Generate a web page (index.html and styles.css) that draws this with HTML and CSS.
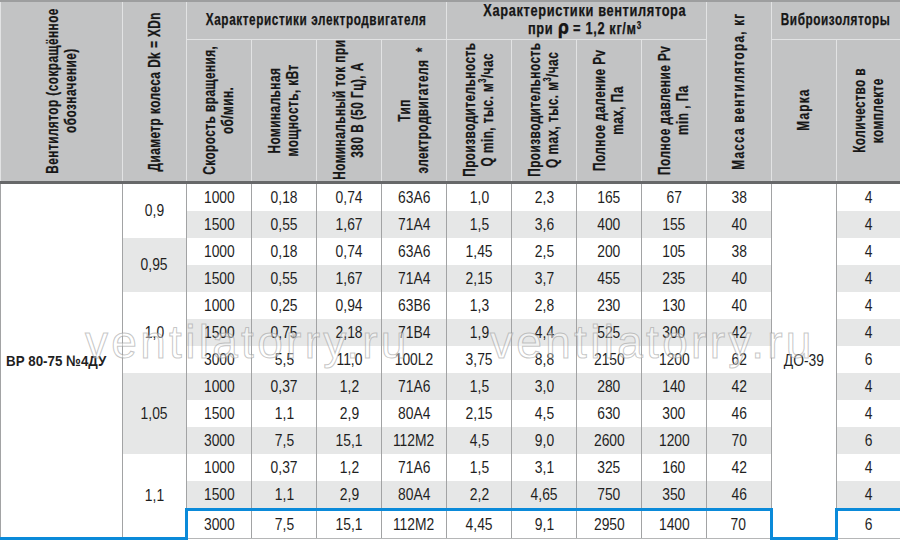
FILE: index.html
```html
<!DOCTYPE html>
<html lang="ru">
<head>
<meta charset="utf-8">
<title>ВР 80-75 №4ДУ</title>
<link rel="stylesheet" href="styles.css">
</head>
<body>
<div class="wrap">
<table class="spec">
  <colgroup>
    <col class="c-name"><col class="c-dia">
    <col class="c-std"><col class="c-std"><col class="c-std"><col class="c-std">
    <col class="c-std"><col class="c-std"><col class="c-std"><col class="c-std">
    <col class="c-std"><col class="c-std"><col class="c-last">
  </colgroup>
  <thead>
    <tr class="h1">
      <th rowspan="2"><div class="vbox"><div class="v">Вентилятор (сокращённое<br>обозначение)</div></div></th>
      <th rowspan="2"><div class="vbox"><div class="v">Диаметр колеса Dk = XDn</div></div></th>
      <th colspan="4" class="grp"><div class="gbox"><span class="gt narrow">Характеристики электродвигателя</span></div></th>
      <th colspan="4" class="grp grp-vent"><div class="gbox"><span class="gt">Характеристики вентилятора<br>при <span class="rho">ρ</span> = 1,2 кг/м<sup>3</sup></span></div></th>
      <th rowspan="2"><div class="vbox"><div class="v wide">Масса вентилятора, кг</div></div></th>
      <th colspan="2" class="grp"><div class="gbox"><span class="gt narrow">Виброизоляторы</span></div></th>
    </tr>
    <tr class="h2">
      <th><div class="vbox"><div class="v">Скорость вращения,<br>об/мин.</div></div></th>
      <th><div class="vbox"><div class="v">Номинальная<br>мощность, кВт</div></div></th>
      <th><div class="vbox"><div class="v">Номинальный ток при<br>380 В (50 Гц), А</div></div></th>
      <th><div class="vbox"><div class="v">Тип<br>электродвигателя&nbsp;&nbsp;*</div></div></th>
      <th><div class="vbox"><div class="v">Производительность<br>Q min, тыс. м<sup>3</sup>/час</div></div></th>
      <th><div class="vbox"><div class="v">Производительность<br>Q max, тыс. м<sup>3</sup>/час</div></div></th>
      <th><div class="vbox"><div class="v">Полное даление Pv<br>max, Па</div></div></th>
      <th><div class="vbox"><div class="v">Полное давление Pv<br>min , Па</div></div></th>
      <th><div class="vbox"><div class="v wide">Марка</div></div></th>
      <th><div class="vbox"><div class="v">Количество в<br>комплекте</div></div></th>
    </tr>
  </thead>
  <tbody>
    <tr>
      <td rowspan="13" class="name span"><b>ВР 80-75 №4ДУ</b></td>
      <td rowspan="2" class="span"><span>0,9</span></td>
      <td><span>1000</span></td><td><span>0,18</span></td><td><span>0,74</span></td><td><span>63А6</span></td><td><span>1,0</span></td><td><span>2,3</span></td><td><span>165</span></td><td><span>67</span></td><td><span>38</span></td>
      <td rowspan="13" class="span mark"><span>ДО-39</span></td>
      <td><span>4</span></td>
    </tr>
    <tr>
      <td><span>1500</span></td><td><span>0,55</span></td><td><span>1,67</span></td><td><span>71А4</span></td><td><span>1,5</span></td><td><span>3,6</span></td><td><span>400</span></td><td><span>155</span></td><td><span>40</span></td><td><span>4</span></td>
    </tr>
    <tr>
      <td rowspan="2" class="span shade"><span>0,95</span></td>
      <td><span>1000</span></td><td><span>0,18</span></td><td><span>0,74</span></td><td><span>63А6</span></td><td><span>1,45</span></td><td><span>2,5</span></td><td><span>200</span></td><td><span>105</span></td><td><span>38</span></td><td><span>4</span></td>
    </tr>
    <tr>
      <td><span>1500</span></td><td><span>0,55</span></td><td><span>1,67</span></td><td><span>71А4</span></td><td><span>2,15</span></td><td><span>3,7</span></td><td><span>455</span></td><td><span>235</span></td><td><span>40</span></td><td><span>4</span></td>
    </tr>
    <tr>
      <td rowspan="3" class="span"><span>1,0</span></td>
      <td><span>1000</span></td><td><span>0,25</span></td><td><span>0,94</span></td><td><span>63В6</span></td><td><span>1,3</span></td><td><span>2,8</span></td><td><span>230</span></td><td><span>130</span></td><td><span>40</span></td><td><span>4</span></td>
    </tr>
    <tr>
      <td><span>1500</span></td><td><span>0,75</span></td><td><span>2,18</span></td><td><span>71В4</span></td><td><span>1,9</span></td><td><span>4,4</span></td><td><span>525</span></td><td><span>300</span></td><td><span>42</span></td><td><span>4</span></td>
    </tr>
    <tr>
      <td><span>3000</span></td><td><span>5,5</span></td><td><span>11,0</span></td><td><span>100L2</span></td><td><span>3,75</span></td><td><span>8,8</span></td><td><span>2150</span></td><td><span>1200</span></td><td><span>62</span></td><td><span>6</span></td>
    </tr>
    <tr>
      <td rowspan="3" class="span shade"><span>1,05</span></td>
      <td><span>1000</span></td><td><span>0,37</span></td><td><span>1,2</span></td><td><span>71А6</span></td><td><span>1,5</span></td><td><span>3,0</span></td><td><span>280</span></td><td><span>140</span></td><td><span>42</span></td><td><span>4</span></td>
    </tr>
    <tr>
      <td><span>1500</span></td><td><span>1,1</span></td><td><span>2,9</span></td><td><span>80А4</span></td><td><span>2,15</span></td><td><span>4,5</span></td><td><span>630</span></td><td><span>300</span></td><td><span>46</span></td><td><span>4</span></td>
    </tr>
    <tr>
      <td><span>3000</span></td><td><span>7,5</span></td><td><span>15,1</span></td><td><span>112М2</span></td><td><span>4,5</span></td><td><span>9,0</span></td><td><span>2600</span></td><td><span>1200</span></td><td><span>70</span></td><td><span>6</span></td>
    </tr>
    <tr>
      <td rowspan="3" class="span last-span"><span>1,1</span></td>
      <td><span>1000</span></td><td><span>0,37</span></td><td><span>1,2</span></td><td><span>71А6</span></td><td><span>1,5</span></td><td><span>3,1</span></td><td><span>325</span></td><td><span>160</span></td><td><span>42</span></td><td><span>4</span></td>
    </tr>
    <tr>
      <td><span>1500</span></td><td><span>1,1</span></td><td><span>2,9</span></td><td><span>80А4</span></td><td><span>2,2</span></td><td><span>4,65</span></td><td><span>750</span></td><td><span>350</span></td><td><span>46</span></td><td><span>4</span></td>
    </tr>
    <tr class="sel">
      <td class="sel-first"><span>3000</span></td><td><span>7,5</span></td><td><span>15,1</span></td><td><span>112М2</span></td><td><span>4,45</span></td><td><span>9,1</span></td><td><span>2950</span></td><td><span>1400</span></td><td class="sel-end"><span>70</span></td><td class="sel-qty"><span>6</span></td>
    </tr>
  </tbody>
</table>
<div class="wm wm-1">ventilatorry.ru</div>
<div class="wm wm-2">ventilatorry.ru</div>
</div>
</body>
</html>
```
FILE: styles.css
```css
html, body {
  margin: 0;
  padding: 0;
  background: #ffffff;
}

body {
  font-family: "Liberation Sans", Arial, sans-serif;
  color: #1f1f1f;
}

.wrap {
  position: relative;
  width: 900px;
  height: 540px;
  overflow: hidden;
}

.spec {
  width: 900px;
  border-collapse: collapse;
  table-layout: fixed;
}

.c-name { width: 122px; }
.c-dia { width: 64px; }
.c-std { width: 65px; }
.c-last { width: 64px; }

/* ---------- header ---------- */
.spec th {
  background: #c2c3c4;
  color: #161616;
  font-weight: bold;
  font-size: 16px;
  line-height: 18px;
  padding: 0;
  text-align: center;
  vertical-align: middle;
  border: 1px solid #e2e3e4;
  white-space: nowrap;
  overflow: visible;
  -webkit-text-stroke: 0.25px #161616;
}

.spec thead tr.h1 th {
  border-top: 2px solid #9d9e9f;
}

.spec tr.h1 { height: 38px; }
.spec tr.h2 { height: 143px; }

.vbox {
  height: 0;
  display: flex;
  align-items: center;
  justify-content: center;
}

.v {
  flex: none;
  writing-mode: vertical-rl;
  white-space: nowrap;
  text-align: center;
  letter-spacing: 0.6px;
  transform: rotate(180deg) scaleY(0.74);
}

.v.wide {
  letter-spacing: 1.6px;
}

.gbox {
  display: flex;
  justify-content: center;
}

.gt {
  flex: none;
  display: block;
  letter-spacing: 0.8px;
  transform: scaleX(0.8);
  line-height: 16px;
}

.gt.narrow {
  transform: scaleX(0.735);
}

.grp-vent .gbox {
  padding-left: 16px;
}

.rho {
  font-size: 20px;
  font-family: "DejaVu Sans", sans-serif;
  font-weight: bold;
  letter-spacing: 0;
}

sup {
  font-size: 10px;
  vertical-align: 5px;
  line-height: 0;
}

/* ---------- body ---------- */
.spec td {
  height: 27px;
  padding: 0;
  font-size: 16.5px;
  text-align: center;
  vertical-align: middle;
  color: #1f1f1f;
  border-left: 1px solid #a2a3a4;
  border-right: 1px solid #a2a3a4;
  border-top: none;
  border-bottom: none;
  background: #ffffff;
  white-space: nowrap;
}

.spec td > span {
  display: inline-block;
  transform: scaleX(0.84);
}

.spec tbody tr:nth-child(even) td {
  background: #e6e7e7;
}

.spec tbody tr:first-child td {
  border-top: 3px solid #676869;
}

.spec tbody td.span {
  background: #ffffff;
}

.spec tbody td.span.shade {
  background: #e6e7e7;
}

.spec td.name {
  text-align: left;
  padding-left: 5px;
}

.spec td.name > b {
  display: inline-block;
  font-size: 15.5px;
  transform: scaleX(0.86);
  transform-origin: left center;
}

/* ---------- highlighted last row ---------- */
.spec tr.sel td {
  border-top: 3px solid #0b8ad9;
  border-bottom: 1px solid #b5b6b7;
}

.spec td.name,
.spec td.last-span,
.spec td.mark {
  border-bottom: 3px solid #0b8ad9;
}

.spec tr.sel td.sel-first {
  border-left: 3px solid #0b8ad9;
}

.spec tr.sel td.sel-end {
  border-right: 3px solid #0b8ad9;
}

.spec tr.sel td.sel-qty {
  border-left: 3px solid #0b8ad9;
}

/* ---------- watermark ---------- */
.wm {
  position: absolute;
  top: 319px;
  font-family: "Liberation Sans", Arial, sans-serif;
  font-size: 46px;
  line-height: 46px;
  letter-spacing: 3.3px;
  color: rgba(255, 255, 255, 0.45);
  -webkit-text-stroke: 1px rgba(150, 150, 150, 0.55);
  white-space: nowrap;
  pointer-events: none;
}

.wm-1 { left: 85px; }
.wm-2 { left: 490px; }
```
